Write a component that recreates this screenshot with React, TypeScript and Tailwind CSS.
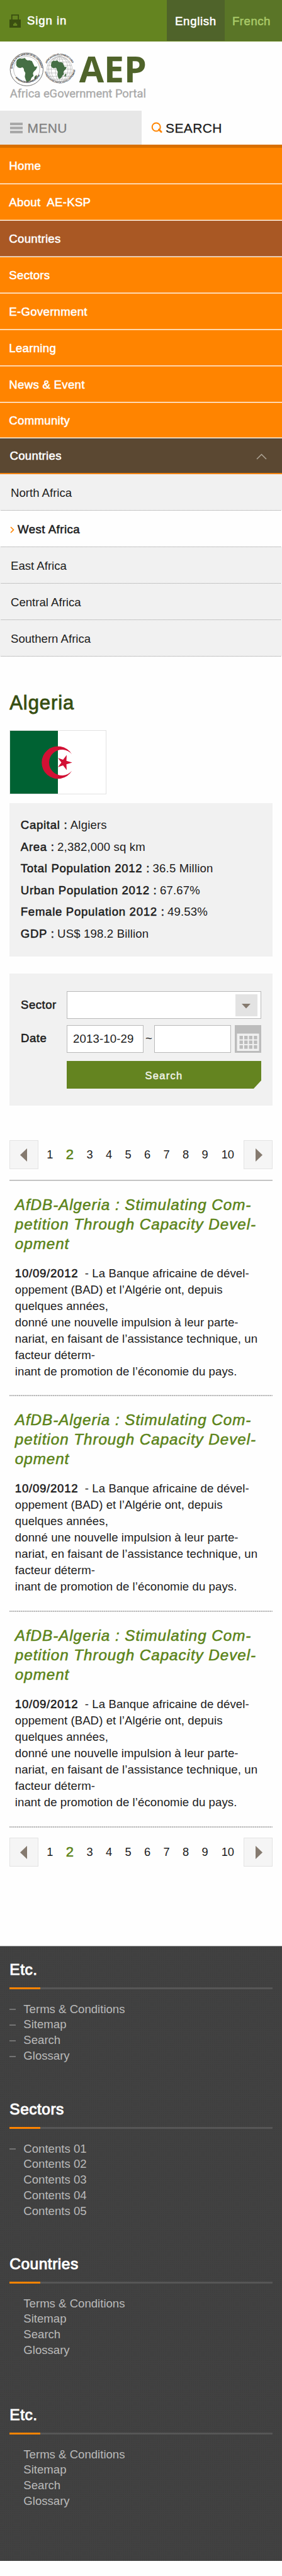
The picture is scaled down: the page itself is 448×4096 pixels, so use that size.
import React from "react";

/* Regular-weight glyphs thickened with a thin stroke of the text colour. */
const heavy = "[-webkit-text-stroke:0.55px_currentColor]";

const nav = [
  { label: "Home", bg: "bg-[#ff8400]", a: "bg-[#ffac55]", b: "bg-white" },
  { label: "About\u00a0 AE-KSP", bg: "bg-[#ff8400]", a: "bg-[#ffb566]", b: "bg-[#fff6ec]" },
  { label: "Countries", bg: "bg-[#a95824]", a: "bg-[#d0a487]", b: "bg-[#fdeedd]" },
  { label: "Sectors", bg: "bg-[#ff8400]", a: "bg-[#ffd5a8]", b: "bg-[#ffdcb5]" },
  { label: "E-Government", bg: "bg-[#ff8400]", a: "bg-[#ffd5a8]", b: "bg-[#ffdcb5]" },
  { label: "Learning", bg: "bg-[#ff8400]", a: "bg-[#fff0e0]", b: "bg-[#ffb870]" },
  { label: "News & Event", bg: "bg-[#ff8400]", a: "bg-white", b: "bg-[#ffac55]" },
];

const regions = ["North Africa", "West Africa", "East Africa", "Central Africa", "Southern Africa"];

const facts = [
  ["Capital :", "Algiers"],
  ["Area :", "2,382,000 sq km"],
  ["Total Population 2012 :", "36.5 Million"],
  ["Urban Population 2012 :", "67.67%"],
  ["Female Population 2012 :", "49.53%"],
  ["GDP :", "US$ 198.2 Billion"],
];

const etcLinks = ["Terms & Conditions", "Sitemap", "Search", "Glossary"];
const footer = [
  { title: "Etc.", links: etcLinks, dashes: 4, h: "h-[222px]" },
  {
    title: "Sectors",
    links: ["Contents 01", "Contents 02", "Contents 03", "Contents 04", "Contents 05"],
    dashes: 1,
    h: "h-[246px]",
  },
  { title: "Countries", links: etcLinks, dashes: 0, h: "h-[240px]" },
  { title: "Etc.", links: etcLinks, dashes: 0, h: "h-[247px]" },
];

const africa =
  "M80 286 L90 279 L104 280 L118 277 L123 284 L132 289 L138 287 L151 291 L157 304 L164 318 L177 317 L171 331 L158 344 L156 352 L159 362 L149 371 L145 382 L136 389 L126 391 L122 382 L117 366 L120 348 L114 338 L112 327 L106 321 L95 325 L84 322 L76 311 L77 297 Z M173 357 L175 364 L169 378 L163 377 L163 367 Z";

function Logo() {
  return (
    <svg width="220" height="78" viewBox="44 246 660 234" className="block overflow-visible">
      <defs>
        <path id="ringA" d="M58 331 A68 68 0 1 1 194 331" />
        <path id="ringB" d="M54 331 A73 73 0 0 0 199 331" />
        <path id="ringC" d="M216 331 A67 67 0 1 1 350 331" />
        <path id="ringD" d="M209 331 A75 75 0 0 0 358 331" />
      </defs>
      <circle cx="126" cy="331" r="78.500" fill="#fff" stroke="#555" strokeWidth="2.500" />
      <circle cx="126" cy="331" r="62" fill="none" stroke="#777" strokeWidth="1.500" />
      <path d={africa} fill="#466f45" />
      <g fontFamily="Liberation Sans" fontWeight="bold" fontSize="12" fill="#444">
        <text>
          <textPath href="#ringA" textLength="206" startOffset="3">BANQUE AFRICAINE DE DEVELOPPEMENT</textPath>
        </text>
        <text>
          <textPath href="#ringB" textLength="140" startOffset="44">AFRICAN DEVELOPMENT BANK</textPath>
        </text>
        <text>
          <textPath href="#ringC" textLength="152" startOffset="28">AFRICAN DEVELOPMENT FUND</textPath>
        </text>
        <text>
          <textPath href="#ringD" textLength="206" startOffset="12">FONDS AFRICAIN DE DEVELOPPEMENT</textPath>
        </text>
      </g>
      <g fill="none" stroke="#999" strokeWidth="1.600">
        <circle cx="283" cy="330" r="60" fill="#fff" />
        <ellipse cx="283" cy="330" rx="20" ry="60" />
        <ellipse cx="283" cy="330" rx="40" ry="60" />
        <ellipse cx="283" cy="330" rx="52" ry="60" />
        <path d="M283 270 V390 M223 330 H343 M226 312 H340 M226 348 H340 M233 296 H333 M233 364 H333 M247 282 H319 M247 378 H319" />
      </g>
      <path d={africa} fill="#466f45" transform="translate(185.800 75) scale(0.740 0.770)" />
      <text x="376" y="392" fontFamily="Open Sans" fontWeight="bold" fontSize="173" fill="#4f632a" textLength="322" lengthAdjust="spacingAndGlyphs">
        AEP
      </text>
      <text x="46" y="466" fontFamily="Roboto" fontSize="53" fill="#a9a9a9" stroke="#a9a9a9" strokeWidth="1" textLength="649" lengthAdjust="spacingAndGlyphs">
        Africa eGovernment Portal
      </text>
    </svg>
  );
}

function Flag() {
  return (
    <svg width="154" height="102" viewBox="0 0 154 102" className="mt-[23px] block">
      <rect x="0.500" y="0.500" width="153" height="101" fill="#fff" stroke="#e2e2e2" />
      <rect x="1" y="1" width="76" height="100" fill="#006233" />
      <path d="M99.300 38.500 A25.800 25.800 0 1 0 99.300 64.500 A20.500 20.500 0 1 1 99.300 38.500 Z" fill="#d21034" />
      <path d="M99.700 51.500 L90.500 54.350 L90.960 63.400 L85.160 56.030 L77.090 58.850 L82.500 51.500 L77.090 44.150 L85.160 46.970 L90.960 39.600 L90.500 48.650 Z" fill="#d21034" />
    </svg>
  );
}

function Calendar() {
  return (
    <svg width="42" height="44" viewBox="0 0 42 44" className="block">
      <rect width="42" height="44" fill="#bcbcbc" />
      <rect x="3.500" y="13.500" width="35" height="27.500" fill="#f1f1f1" />
      {[17, 24.500, 32].map((y) =>
        [7.500, 15, 22.600, 30.200].map((x) => (
          <rect key={x + "-" + y} x={x} y={y} width="5.400" height="5.600" fill="#bcbcbc" />
        ))
      )}
    </svg>
  );
}

function Pager({ className }: { className: string }) {
  const box = "flex h-[46px] w-[46px] shrink-0 items-center justify-center border border-[#e3e3e3] bg-[#f5f5f5]";
  return (
    <div className={"flex h-[46px] justify-between " + className}>
      <div className={box}>
        <svg width="11" height="21" viewBox="0 0 11 21" className="-ml-px">
          <path d="M11 0 V21 L0 10.500 Z" fill="#857a6f" />
        </svg>
      </div>
      <div className="flex min-w-0 flex-1 pl-[3px] text-[18.3px] leading-[46px] text-[#1c1c1c]">
        <span className="w-[30px] shrink-0 text-center">1</span>
        <span className={"w-[33px] shrink-0 text-center text-[22px] text-[#5c8419] " + heavy}>2</span>
        {["3", "4", "5", "6", "7", "8", "9"].map((n) => (
          <span key={n} className="w-[30.5px] shrink-0 text-center">
            {n}
          </span>
        ))}
        <span className="ml-[3px] w-[36px] shrink-0 text-center">10</span>
      </div>
      <div className={box}>
        <svg width="11" height="21" viewBox="0 0 11 21" className="ml-[3px]">
          <path d="M0 0 V21 L11 10.500 Z" fill="#857a6f" />
        </svg>
      </div>
    </div>
  );
}

function Article({ h }: { h: string }) {
  return (
    <article>
      <div className={"pl-[8.500px] pt-[22px] " + h}>
        <h2
          className={
            "whitespace-nowrap text-[24.2px] italic leading-[31px] tracking-[0.97px] text-[#5c8419] " + heavy
          }
        >
          AfDB-Algeria : Stimulating Com-
          <br />
          petition Through Capacity Devel-
          <br />
          opment
        </h2>
        <p className="mt-[19px] whitespace-nowrap text-[18.6px] leading-[26.06px] tracking-[0.08px] text-[#1c1c1c]">
          <span className={"tracking-[0.75px] " + heavy}>10/09/2012</span>&nbsp; - La Banque africaine de dével-
          <br />
          oppement (BAD) et l’Algérie ont, depuis
          <br />
          quelques années,
          <br />
          donné une nouvelle impulsion à leur parte-
          <br />
          nariat, en faisant de l’assistance technique, un
          <br />
          facteur déterm-
          <br />
          inant de promotion de l’économie du pays.
        </p>
      </div>
      <div className="h-[2px] bg-[repeating-linear-gradient(90deg,#b8b8b8_0px,#b8b8b8_2px,#ececec_2px,#ececec_3px)]" />
    </article>
  );
}

export default function App() {
  return (
    <div className="h-[4096px] w-[448px] overflow-hidden bg-[#fefefe] font-['Liberation_Sans',Arial,sans-serif] text-[18.6px]">
      <header className="flex h-[66px] bg-[#648420]">
        <div className="flex flex-1 pl-[15px]">
          <svg width="18" height="21" viewBox="0 0 18 21" className="mt-[23px]">
            <path d="M3.800 9 V0.900 H14.200 V9" fill="none" stroke="#3a4f10" strokeWidth="1.800" />
            <path d="M0 8 H18 V21 H0 Z M7.600 13.300 V15 H6 V18 H12.300 V15 H10.700 V13.300 Z" fill="#3a4f10" fillRule="evenodd" />
          </svg>
          <span className={"ml-[10px] text-white leading-[65px] tracking-[0.9px] " + heavy}>Sign in</span>
        </div>
        <div className={"h-[65px] w-[92px] bg-[#4f632a] pl-[13px] leading-[68px] tracking-[0.7px] text-white " + heavy}>
          English
        </div>
        <div className={"h-[65px] w-[91px] bg-[#5a7527] pl-[12px] leading-[68px] tracking-[0.5px] text-[#a9c968] " + heavy}>
          French
        </div>
      </header>

      <div className="h-[110px] pl-[15px] pt-[16px]">
        <Logo />
      </div>

      <div className="flex h-[54px] text-[21px] leading-[54px] tracking-[0.4px]">
        <div className="flex w-[225px] items-center bg-[#e7e7e7] pl-[15.500px] text-[#7f7f7f]">
          <svg width="20" height="17" viewBox="0 0 20 17">
            <path d="M0 0 H20 V4 H0 Z M0 6.500 H20 V10.500 H0 Z M0 13 H20 V17 H0 Z" fill="#a8a8a8" />
          </svg>
          <span className="ml-[8px] pt-px [-webkit-text-stroke:0.3px_currentColor]">MENU</span>
        </div>
        <div className="flex flex-1 items-center pl-[15px] text-[#1c1c1c]">
          <svg width="19" height="18" viewBox="0 0 19 18">
            <circle cx="8.200" cy="8" r="6.500" fill="none" stroke="#ff8400" strokeWidth="2" />
            <path d="M12.500 12 L16.200 15.700" stroke="#ff8400" strokeWidth="2.800" strokeLinecap="round" />
          </svg>
          <span className="ml-[4px] pt-px [-webkit-text-stroke:0.3px_currentColor]">SEARCH</span>
        </div>
      </div>

      <nav className={"text-white " + heavy}>
        <div className="h-[5px] bg-[#d97000]" />
        {nav.map((n) => (
          <div key={n.label}>
            <div className={"h-[56px] pl-[14.3px] pt-px leading-[56px] tracking-[0.3px] " + n.bg}>{n.label}</div>
            <div className={"h-px " + n.a} />
            <div className={"h-px " + n.b} />
          </div>
        ))}
        <div className="h-[54px] bg-[#ff8400] pl-[14.3px] leading-[56px] tracking-[0.3px]">Community</div>
        <div className="h-px bg-[#ffac55]" />
        <div className="h-px bg-white" />
        <div className="flex h-[57px] items-center justify-between border-b-2 border-[#f58412] bg-[#5b4832] pl-[15.500px] pr-[24px] leading-[55px] tracking-[0.3px]">
          <span>Countries</span>
          <svg width="17" height="10" viewBox="0 0 17 10" className="mt-[3px]">
            <path d="M1 9 L8.500 1.500 L16 9" fill="none" stroke="#aea596" strokeWidth="1.500" />
          </svg>
        </div>
      </nav>

      <div className="text-[#1c1c1c]">
        {regions.map((r) => (
          <div key={r}>
            {r === "West Africa" ? (
              <div className="flex h-[57px] pl-[15.500px] pt-[2px] leading-[56px]">
                <svg width="7" height="11" viewBox="0 0 7 11" className="mt-[23px]">
                  <path d="M1 1 L5.500 5.500 L1 10" fill="none" stroke="#ff8400" strokeWidth="1.600" />
                </svg>
                <span className={"ml-[5.500px] tracking-[0.5px] " + heavy}>{r}</span>
              </div>
            ) : (
              <div className="h-[57px] bg-[#f1f1f1] pl-[17px] pt-[2px] leading-[56px]">{r}</div>
            )}
            <div className="mx-px h-px bg-[repeating-linear-gradient(90deg,#b4b4b4_0px,#b4b4b4_1px,#d8d8d8_1px,#d8d8d8_2px)]" />
          </div>
        ))}
      </div>

      <main className="px-[15.300px]">
        <h1 className="pt-[54px] text-[31px] leading-[40px] tracking-[0.9px] text-[#364d10] [-webkit-text-stroke:0.8px_currentColor]">
          Algeria
        </h1>
        <Flag />

        <dl className="mt-[14px] h-[244px] bg-[#f1f1f1] pl-[17.500px] pt-[18px] leading-[34.6px] text-[#1c1c1c]">
          {facts.map(([k, v]) => (
            <div key={k} className="flex">
              <dt className={"tracking-[0.7px] " + heavy}>{k}</dt>
              <dd className="ml-[4.500px] tracking-[0.15px]">{v}</dd>
            </div>
          ))}
        </dl>

        <form className="mt-[27px] h-[210px] bg-[#f1f1f1] pl-[17.700px] pt-[28px] text-[#1c1c1c]">
          <div className="flex h-[44px]">
            <label className={"w-[73px] leading-[44px] tracking-[0.5px] " + heavy}>Sector</label>
            <div className="flex w-[309px] items-center justify-end border border-[#b9b9b9] bg-white pr-[5px]">
              <div className="flex h-[35px] w-[35px] items-center justify-center bg-[#e3e3e3]">
                <svg width="14" height="8" viewBox="0 0 14 8" className="mt-[3px]">
                  <path d="M0 0 H14 L7 7.500 Z" fill="#857a6f" />
                </svg>
              </div>
            </div>
          </div>
          <div className="mt-[10px] flex h-[44px]">
            <label className={"w-[73px] leading-[42px] tracking-[0.5px] " + heavy}>Date</label>
            <div className="w-[122px] border border-[#b9b9b9] bg-white pl-[9px] leading-[42px] tracking-[0.15px]">
              2013-10-29
            </div>
            <span className="w-[17px] text-center leading-[42px]">~</span>
            <div className="w-[122px] border border-[#b9b9b9] bg-white" />
            <div className="ml-[6px]">
              <Calendar />
            </div>
          </div>
          <div className="ml-[73px] mt-[13px] h-[44px] w-[309px] bg-[#648420] text-center text-[16.5px] leading-[47px] tracking-[1.3px] text-[#f0f2e6] [-webkit-text-stroke:0.5px_currentColor] [clip-path:polygon(0_0,100%_0,100%_31px,297px_100%,0_100%)]">
            Search
          </div>
        </form>

        <Pager className="mt-[55px]" />
        <div className="mt-[17px] h-px bg-[#b0b0b0]" />
        <div className="h-px bg-[#dadada]" />
        <Article h="h-[340px]" />
        <Article h="h-[341px]" />
        <Article h="h-[341px]" />
        <Pager className="mt-[16px]" />
      </main>

      <footer className="mt-[126px] h-[978px] border-t border-[#8c8c8c] bg-[#414141] bg-[radial-gradient(#3b3b3b_0.7px,transparent_0.8px)] bg-[length:3px_3px] px-[15.300px] pt-[22px]">
        {footer.map((s, i) => (
          <section key={i} className={s.h}>
            <h3 className="text-[24.500px] leading-[30px] tracking-[0.5px] text-white [-webkit-text-stroke:1px_currentColor]">
              {s.title}
            </h3>
            <div className="mt-[13px] h-[3px] bg-[#565656]">
              <div className="h-[3px] w-[49px] bg-[#ff8400]" />
            </div>
            <ul className="mt-[19.500px] leading-[24.950px] text-[#bababa]">
              {s.links.map((l, j) => (
                <li key={l} className="flex items-center">
                  <span className={j < s.dashes ? "h-[2px] w-[10px] bg-[#737373]" : "h-[2px] w-[10px]"} />
                  <span className="ml-[12px]">{l}</span>
                </li>
              ))}
            </ul>
          </section>
        ))}
      </footer>
    </div>
  );
}
